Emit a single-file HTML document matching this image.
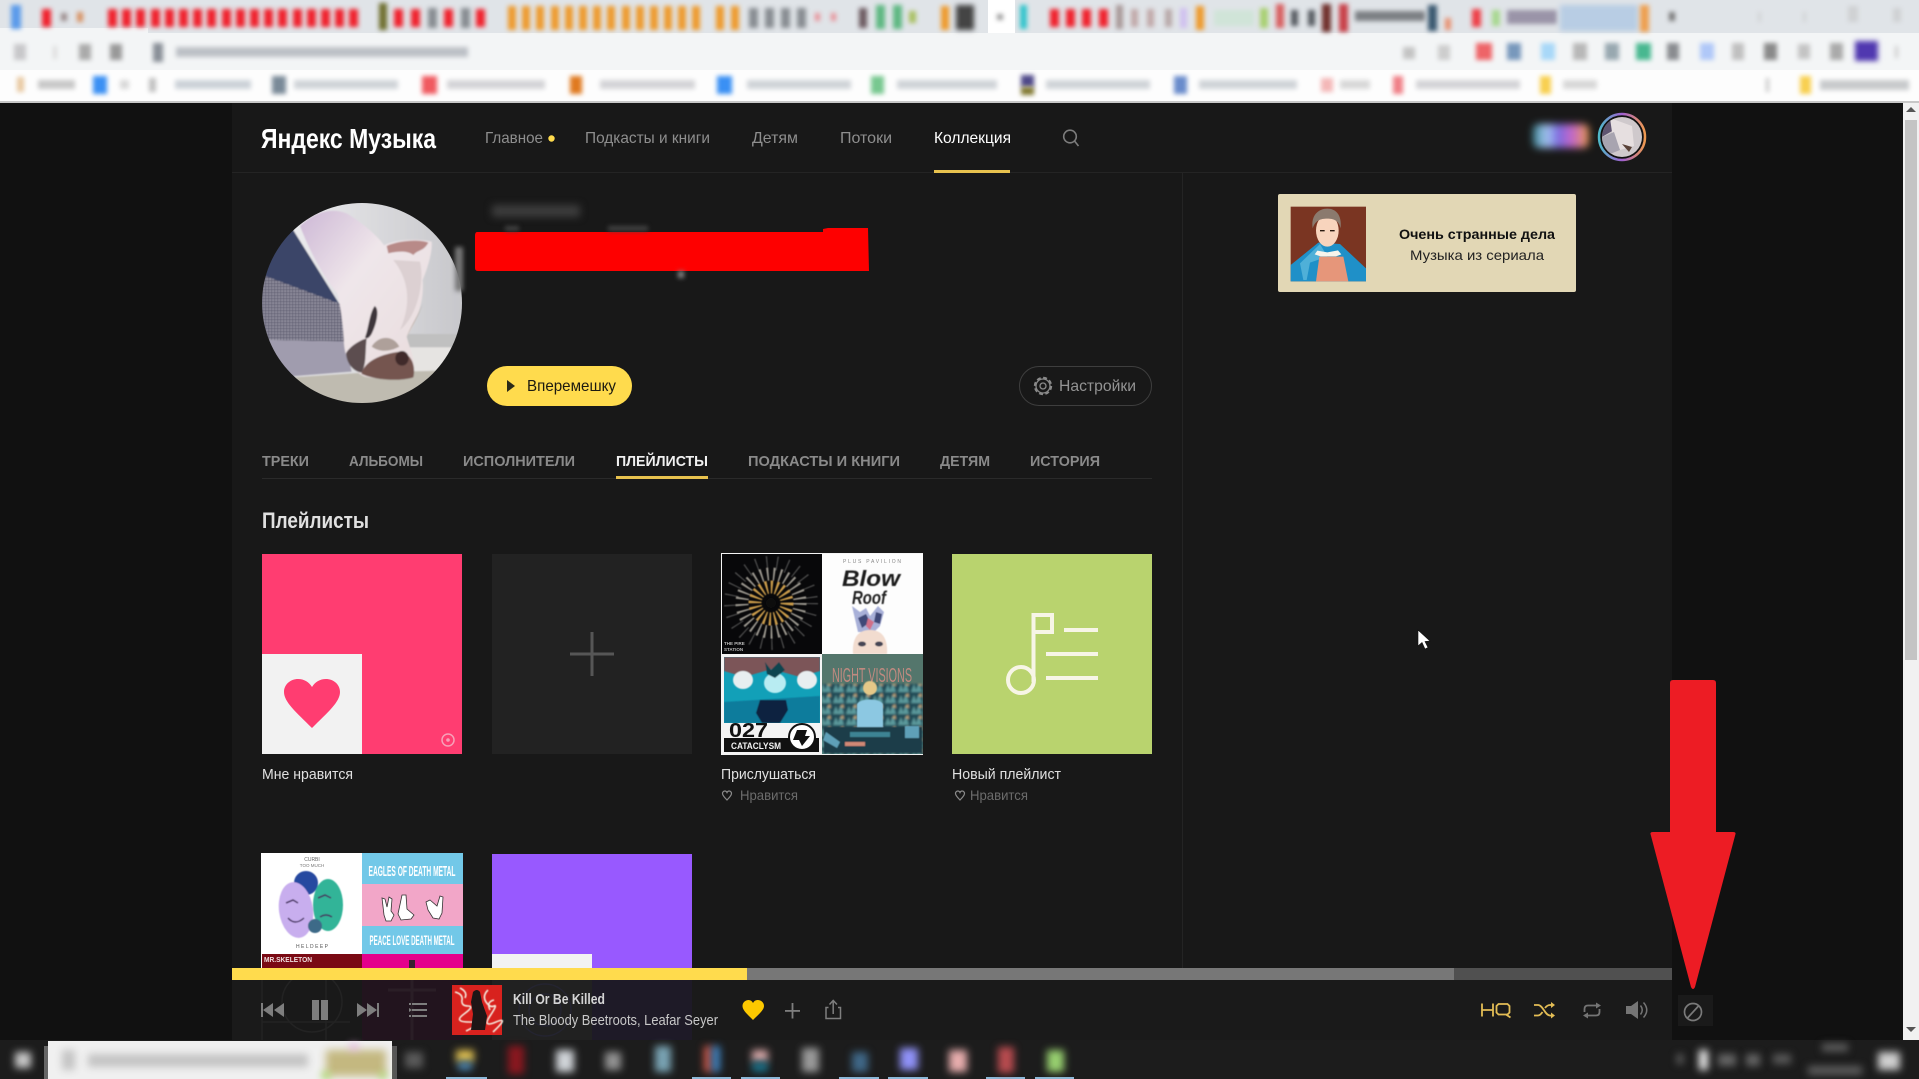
<!DOCTYPE html>
<html lang="ru"><head><meta charset="utf-8"><title>Яндекс Музыка</title>
<style>
html,body{margin:0;padding:0;background:#111;overflow:hidden;width:1919px;height:1079px}
body{position:relative}
svg{display:block;position:absolute;left:0;top:0}
i{position:absolute;display:block;margin-left:-3000px;box-shadow:3000px 0 5px}
i.t{box-shadow:3000px 0 8px}
i.r{top:9px;width:9px;height:18px;color:#f0202c}
i.o{top:6px;width:8px;height:24px;color:#ee9a2c}
i.g{top:8px;width:9px;height:20px;color:#888d92}
text{font-family:"Liberation Sans","Noto Sans CJK SC",sans-serif}
</style></head><body>
<svg xmlns="http://www.w3.org/2000/svg" width="1919" height="1079" viewBox="0 0 1919 1079">
<defs>
<filter id="b3" x="-20%" y="-50%" width="140%" height="200%"><feGaussianBlur stdDeviation="4"/></filter>
<filter id="b2" x="-20%" y="-50%" width="140%" height="200%"><feGaussianBlur stdDeviation="2"/></filter>
<filter id="b1" x="-10%" y="-10%" width="120%" height="120%"><feGaussianBlur stdDeviation="1"/></filter>
<filter id="b05" x="-10%" y="-10%" width="120%" height="120%"><feGaussianBlur stdDeviation="0.6"/></filter>
<filter id="bd" x="-10%" y="-10%" width="120%" height="120%"><feGaussianBlur stdDeviation="2.500"/></filter>
<pattern id="chk" width="9" height="9" patternUnits="userSpaceOnUse"><rect width="9" height="9" fill="#a8a6b4"/><rect width="3.500" height="9" fill="#56556a"/><rect width="9" height="3.500" fill="#56556a"/></pattern>
<pattern id="crowd" width="13" height="11" patternUnits="userSpaceOnUse"><rect width="13" height="11" fill="#234b56"/><path d="M1 10l3-8 2 6 3-7 3 9z" fill="#5c9a9c"/><path d="M8 3l3-3 1 4z" fill="#c8a878"/></pattern>
<clipPath id="av"><circle cx="362" cy="303" r="100"/></clipPath>
<clipPath id="av2"><circle cx="1622" cy="137" r="20"/></clipPath>
<clipPath id="c1"><rect x="724" y="657" width="96" height="66"/></clipPath>
<clipPath id="c2"><rect x="822" y="654" width="101" height="100"/></clipPath>
<clipPath id="c3"><rect x="822" y="554" width="101" height="100"/></clipPath>
<clipPath id="c0"><rect x="722" y="554" width="100" height="100"/></clipPath>
<clipPath id="pl"><rect x="232" y="980" width="1440" height="60"/></clipPath>
<linearGradient id="ring" x1="0" y1="0" x2="1" y2="0"><stop offset="0" stop-color="#4fb8c8"/><stop offset=".5" stop-color="#a05fd0"/><stop offset="1" stop-color="#f09a50"/></linearGradient>
<linearGradient id="userb" x1="0" y1="0" x2="1" y2="0"><stop offset="0" stop-color="#3b8a98"/><stop offset=".25" stop-color="#a4c4f0"/><stop offset=".45" stop-color="#7a6ae0"/><stop offset=".7" stop-color="#c467c8"/><stop offset="1" stop-color="#e89a4a"/></linearGradient>
<linearGradient id="wall" x1="0" y1="0" x2="1" y2="0"><stop offset="0" stop-color="#f2f2f4"/><stop offset="1" stop-color="#c6c6ca"/></linearGradient>
<linearGradient id="dogb" x1="0" y1="0" x2="1" y2="1"><stop offset="0" stop-color="#cdb8d6"/><stop offset=".4" stop-color="#efe6ea"/><stop offset="1" stop-color="#e8dcdc"/></linearGradient>
</defs>

<!-- browser chrome -->
<rect width="1919" height="33" fill="#e0e4e8"/>
<rect y="33" width="1919" height="37" fill="#f3f5f6"/>
<rect y="70" width="1919" height="32" fill="#fdfdfd"/>
<rect y="101" width="1919" height="2" fill="#c8c8c8"/>
<rect x="0" y="28" width="148" height="8" fill="#f3f5f6"/>
<rect x="988" y="0" width="27" height="33" fill="#ffffff"/>

<!-- page -->
<rect y="103" width="1919" height="937" fill="#111"/>
<rect x="232" y="103" width="1440" height="937" fill="#181818"/>
<rect x="232" y="172" width="1440" height="1" fill="#242424"/>
<rect x="1182" y="173" width="1" height="795" fill="#242424"/>
<rect x="1903" y="103" width="16" height="937" fill="#f1f1f1"/>
<rect x="1905" y="120" width="12" height="540" fill="#c4c4c4"/>
<path d="M1906 1027h10l-5 5z" fill="#555"/><path d="M1906 112h10l-5-5z" fill="#555"/>

<!-- header -->
<text x="261" y="148" font-size="28" font-weight="bold" fill="#fff" textLength="175" lengthAdjust="spacingAndGlyphs">Яндекс Музыка</text>
<text x="485" y="143" font-size="16" fill="#8e8e8e" textLength="58" lengthAdjust="spacingAndGlyphs">Главное</text>
<circle cx="551.500" cy="138.500" r="3.200" fill="#ffdb4d"/>
<text x="585" y="143" font-size="16" fill="#8e8e8e" textLength="125" lengthAdjust="spacingAndGlyphs">Подкасты и книги</text>
<text x="752" y="143" font-size="16" fill="#8e8e8e" textLength="46" lengthAdjust="spacingAndGlyphs">Детям</text>
<text x="840" y="143" font-size="16" fill="#8e8e8e" textLength="52" lengthAdjust="spacingAndGlyphs">Потоки</text>
<text x="934" y="143" font-size="16" fill="#fff" textLength="77" lengthAdjust="spacingAndGlyphs">Коллекция</text>
<rect x="934" y="170" width="76" height="3" fill="#e8c24e"/>
<circle cx="1070" cy="136.500" r="6.300" fill="none" stroke="#7c7c7c" stroke-width="1.600"/><path d="M1074.500 141l4 5" stroke="#7c7c7c" stroke-width="1.600" fill="none"/>
<rect x="1533" y="124" width="56" height="24" rx="6" fill="url(#userb)" filter="url(#b3)"/>
<circle cx="1622" cy="137" r="23" fill="#111" stroke="url(#ring)" stroke-width="2.500"/>
<g clip-path="url(#av2)"><rect x="1600" y="115" width="44" height="44" fill="#cfc9cc"/><path d="M1600 118h12l2 12-14 8z" fill="#5e5470"/><path d="M1610 118l22 8 2 20-14 4-8-18z" fill="#e6dfe0"/><path d="M1622 144l10 3-3 5z" fill="#5a4238"/><path d="M1600 138l14-6 6 18-20 8z" fill="#a8a4b0"/></g>

<!-- banner -->
<rect x="1278" y="194" width="298" height="98" rx="2" fill="#e2d7b5"/>
<g transform="translate(1240 100) scale(.33333)">
<rect x="152" y="320" width="226" height="224" fill="#7a3522"/>
<path d="M152 544V495L235 428 300 432 378 505V544Z" fill="#1f90c8"/>
<path d="M180 490L240 432 262 470 210 488 200 540H190Z" fill="#4fb0d8"/>
<path d="M238 470H310L325 544H228Z" fill="#e6967a"/>
<ellipse cx="262" cy="392" rx="34" ry="48" fill="#f8d4bd"/>
<path d="M218 385C212 345 236 326 262 326 288 326 306 345 302 385 296 362 282 356 262 356 240 356 226 362 218 385Z" fill="#8b7a6e"/>
<path d="M232 452l30 5 32-6 10 12-16 6h-46l-18-6z" fill="#f8f4ec"/>
<path d="M240 392h14M270 392h14" stroke="#2a1a10" stroke-width="4"/>
</g>
<text x="1477" y="239" text-anchor="middle" font-size="14" font-weight="bold" fill="#111" textLength="156" lengthAdjust="spacingAndGlyphs">Очень странные дела</text>
<text x="1477" y="260" text-anchor="middle" font-size="14" fill="#222" textLength="134" lengthAdjust="spacingAndGlyphs">Музыка из сериала</text>

<!-- avatar -->
<g clip-path="url(#av)"><g transform="translate(250 190) scale(.33333)" filter="url(#bd)">
<rect x="30" y="30" width="620" height="620" fill="url(#wall)"/>
<rect x="460" y="432" width="170" height="40" fill="#c0c0c0"/>
<rect x="470" y="472" width="170" height="75" fill="#e6e4e2"/>
<path d="M30 258L120 105 270 345 280 350Z" fill="#3a4468"/>
<path d="M30 252L280 345 285 455 30 450Z" fill="url(#chk)"/>
<path d="M30 450L285 455 305 545 120 560 30 500Z" fill="#a09cae"/>
<path d="M120 562L340 548 640 540V650H120Z" fill="#bfbbb0"/>
<path d="M150 108C190 70 240 50 290 70 340 100 385 140 402 166 440 148 500 145 545 155 548 190 530 240 518 270 522 320 510 380 470 440 480 480 498 510 490 545 480 565 400 572 345 560 310 545 285 510 282 460 280 400 270 340 262 310 230 270 190 210 150 108Z" fill="url(#dogb)"/>
<path d="M410 168C450 150 510 148 535 158 520 185 505 178 490 195 470 180 440 185 415 190Z" fill="#b88a88"/>
<path d="M430 210C470 260 490 330 450 420 500 380 525 280 510 215Z" fill="#dcd0d2"/>
<path d="M374 348C388 355 382 395 368 425 360 445 350 448 345 442 355 420 358 370 374 348Z" fill="#3e343a"/>
<path d="M288 490C298 470 330 450 350 445 345 490 350 520 335 548 310 545 290 520 288 490Z" fill="#5c4e50"/>
<path d="M335 548C350 505 410 490 450 485 485 490 498 530 490 562 450 574 380 572 335 552Z" fill="#74544f"/>
<ellipse cx="456" cy="505" rx="20" ry="22" fill="#402c2a"/>
<path d="M365 470C385 435 430 435 448 470 420 485 390 488 365 470Z" fill="#aea09a"/>
<path d="M470 440C490 400 510 370 517 340 508 372 490 395 470 440Z" fill="#8a7a60"/>
</g></g>

<!-- redaction -->
<path d="M477 232H823V229L828 228H868L869 271H478Q475 271 475 268V236Q475 232 477 232Z" fill="#fe0000"/>

<!-- buttons -->
<rect x="487" y="366" width="145" height="40" rx="20" fill="#ffdb4d"/>
<path d="M507 380l8 6-8 6z" fill="#2a2a18"/>
<text x="527" y="391" font-size="16" fill="#1c1a10" textLength="89" lengthAdjust="spacingAndGlyphs">Вперемешку</text>
<rect x="1019.500" y="366.500" width="132" height="39" rx="19.500" fill="none" stroke="#3e3e3e"/>
<circle cx="1043" cy="386" r="7" fill="none" stroke="#8a8a8a" stroke-width="1.300"/><circle cx="1043" cy="386" r="8.300" fill="none" stroke="#8a8a8a" stroke-width="1.800" stroke-dasharray="4 2.500"/><circle cx="1043" cy="386" r="3" fill="none" stroke="#8a8a8a" stroke-width="1.300"/>
<text x="1059" y="391" font-size="16" fill="#939393" textLength="77" lengthAdjust="spacingAndGlyphs">Настройки</text>

<!-- tabs -->
<rect x="262" y="478" width="890" height="1" fill="#2a2a2a"/>
<g font-size="15" font-weight="bold" fill="#8a8a8a">
<text x="262" y="466" textLength="47" lengthAdjust="spacingAndGlyphs">ТРЕКИ</text>
<text x="349" y="466" textLength="74" lengthAdjust="spacingAndGlyphs">АЛЬБОМЫ</text>
<text x="463" y="466" textLength="112" lengthAdjust="spacingAndGlyphs">ИСПОЛНИТЕЛИ</text>
<text x="616" y="466" fill="#f0f0f0" textLength="92" lengthAdjust="spacingAndGlyphs">ПЛЕЙЛИСТЫ</text>
<text x="748" y="466" textLength="152" lengthAdjust="spacingAndGlyphs">ПОДКАСТЫ И КНИГИ</text>
<text x="940" y="466" textLength="50" lengthAdjust="spacingAndGlyphs">ДЕТЯМ</text>
<text x="1030" y="466" textLength="70" lengthAdjust="spacingAndGlyphs">ИСТОРИЯ</text>
</g>
<rect x="616" y="476" width="92" height="3" fill="#e8c24e"/>
<text x="262" y="528" font-size="22" font-weight="bold" fill="#e0e0e0" textLength="107" lengthAdjust="spacingAndGlyphs">Плейлисты</text>

<!-- tile 1 -->
<rect x="262" y="554" width="200" height="200" fill="#ff3d71"/>
<rect x="262" y="654" width="100" height="100" fill="#f2f2f2"/>
<path d="M312 728C296 712 284 702 284 692 284 684 291 679 298 679 304 679 309 682 312 687 315 682 320 679 326 679 333 679 340 684 340 692 340 702 328 712 312 728Z" fill="#ff3d71"/>
<circle cx="448" cy="740" r="6" fill="none" stroke="#f7a0b8" stroke-width="1.500"/><circle cx="448" cy="740" r="1.800" fill="#f7a0b8"/>
<text x="262" y="779" font-size="15" fill="#e0e0e0" textLength="91" lengthAdjust="spacingAndGlyphs">Мне нравится</text>

<!-- tile 2 -->
<rect x="492" y="554" width="200" height="200" fill="#222"/>
<rect x="570" y="652.500" width="44" height="3" fill="#565656"/><rect x="590.500" y="632" width="3" height="44" fill="#565656"/>

<!-- tile 3 -->
<rect x="721" y="553" width="202" height="202" fill="#f4f4f4"/>
<rect x="722" y="554" width="100" height="100" fill="#08080a"/>
<g clip-path="url(#c0)" fill="none" filter="url(#b05)">
<circle cx="771" cy="603" r="40" stroke="#4c4c4c" stroke-width="14" stroke-dasharray="1.200 9"/>
<circle cx="771" cy="603" r="29" stroke="#98948c" stroke-width="13" stroke-dasharray="1.800 4.500"/>
<circle cx="771" cy="603" r="16" stroke="#c89a48" stroke-width="13" stroke-dasharray="2 3"/>
<circle cx="771" cy="603" r="5" fill="#111"/>
</g>
<text x="724" y="645" font-size="4.500" font-weight="bold" fill="#bbb">THE PIRE</text><text x="724" y="651" font-size="4.500" font-weight="bold" fill="#bbb">STATION</text>
<rect x="822" y="554" width="101" height="100" fill="#fdfdfd"/>
<g clip-path="url(#c3)">
<text x="872" y="563" text-anchor="middle" font-size="5" fill="#888" textLength="58">PLUS PAVILION</text>
<g filter="url(#b05)">
<text x="842" y="586" font-size="22" font-weight="bold" font-style="italic" fill="#1a1a1a" textLength="58" lengthAdjust="spacingAndGlyphs">Blow</text>
<text x="852" y="604" font-size="18" font-weight="bold" font-style="italic" fill="#222" textLength="34" lengthAdjust="spacingAndGlyphs">Roof</text>
<path d="M852 606l8 6 6-4 4 8 8-10 6 6-4 14-6 6h-16z" fill="#a8b0d8"/><path d="M858 618l8-4 4 8-8 6zM876 612l6 2-2 10-6-2z" fill="#404878"/><path d="M868 618l6 4-4 8-4-4z" fill="#d07088"/>
<path d="M853 654C852 638 858 630 870 630 882 630 888 638 887 654Z" fill="#f2dccf"/><ellipse cx="862" cy="644" rx="4" ry="2.500" fill="#445"/><ellipse cx="879" cy="644" rx="4" ry="2.500" fill="#445"/>
</g></g>
<rect x="722" y="654" width="100" height="100" fill="#f4f4f4"/>
<rect x="724" y="657" width="96" height="66" fill="#12a0b8"/>
<g clip-path="url(#c1)" filter="url(#b05)">
<path d="M724 657h96v14l-20 6-28-8-28 8-20-6z" fill="#7c5558"/>
<ellipse cx="743" cy="680" rx="10" ry="9" fill="#e8eef0"/><ellipse cx="807" cy="680" rx="10" ry="9" fill="#e8eef0"/>
<path d="M724 702l96-6v27h-96z" fill="#0c7c9c"/>
<ellipse cx="775" cy="683" rx="11" ry="10" fill="#b8ecf2"/>
<path d="M760 700h26l2 10-8 13h-18l-6-10z" fill="#0e2440"/>
<path d="M765 662l6 8 8-8 6 8-10 8-8-4z" fill="#0e4450"/>
</g>
<text x="729" y="737" font-size="20" font-weight="bold" fill="#111" textLength="39" lengthAdjust="spacingAndGlyphs">027</text>
<rect x="724" y="738" width="95" height="14" fill="#111"/>
<text x="731" y="749" font-size="9" font-weight="bold" fill="#f4f4f4" textLength="50" lengthAdjust="spacingAndGlyphs">CATACLYSM</text>
<circle cx="802" cy="737" r="13" fill="#fff" stroke="#111" stroke-width="2"/><path d="M797 730h10l-2 6h5l-8 10-3-6h-6z" fill="#111"/>
<rect x="822" y="654" width="101" height="100" fill="#54766c"/>
<g clip-path="url(#c2)">
<rect x="822" y="684" width="101" height="70" fill="url(#crowd)" filter="url(#b1)"/>
<text x="832" y="682" font-size="20" fill="#c08a80" textLength="80" lengthAdjust="spacingAndGlyphs">NIGHT VISIONS</text>
<g filter="url(#b05)">
<path d="M857 727V704C860 698 880 698 883 704V727Z" fill="#8cc8e2"/>
<circle cx="870" cy="688" r="7" fill="#e4c888"/>
<rect x="824" y="727" width="98" height="26" fill="#1d3c48"/>
<path d="M826 732l14 10-3 6-14-8zM905 726h14v12h-14z" fill="#5ea0b8"/><rect x="850" y="732" width="40" height="5" fill="#3c8494"/><rect x="845" y="742" width="20" height="4" fill="#d08874"/>
</g></g>
<text x="721" y="779" font-size="15" fill="#e0e0e0" textLength="95" lengthAdjust="spacingAndGlyphs">Прислушаться</text>
<path d="M727 800c-3-3-4.500-4.800-4.500-6.500 0-1.500 1.200-2.500 2.300-2.500 1 0 1.800.6 2.200 1.500.4-.9 1.200-1.500 2.200-1.500 1.100 0 2.300 1 2.300 2.500 0 1.700-1.500 3.500-4.500 6.500z" fill="none" stroke="#8a8a8a" stroke-width="1.200"/>
<text x="740" y="800" font-size="14" fill="#6c6c6c" textLength="58" lengthAdjust="spacingAndGlyphs">Нравится</text>

<!-- tile 4 -->
<rect x="952" y="554" width="200" height="200" fill="#b9d36e"/>
<g fill="none" stroke="#f7f5e6" stroke-width="4">
<circle cx="1021" cy="680" r="13"/><path d="M1033.500 682V615H1052V632H1035"/>
<path d="M1064 630H1098M1046 654H1098M1046 678H1098"/>
</g>
<text x="952" y="779" font-size="15" fill="#e0e0e0" textLength="109" lengthAdjust="spacingAndGlyphs">Новый плейлист</text>
<path d="M960 800c-3-3-4.500-4.800-4.500-6.500 0-1.500 1.200-2.500 2.300-2.500 1 0 1.800.6 2.200 1.500.4-.9 1.200-1.500 2.200-1.500 1.100 0 2.300 1 2.300 2.500 0 1.700-1.500 3.500-4.500 6.500z" fill="none" stroke="#8a8a8a" stroke-width="1.200"/>
<text x="970" y="800" font-size="14" fill="#6c6c6c" textLength="58" lengthAdjust="spacingAndGlyphs">Нравится</text>

<!-- row 2 -->
<rect x="261" y="853" width="202" height="115" fill="#fff"/>
<g filter="url(#b05)">
<circle cx="306" cy="883" r="12" fill="#2848a0"/>
<ellipse cx="296" cy="910" rx="17" ry="28" fill="#c8aeee" transform="rotate(-8 296 910)"/>
<ellipse cx="328" cy="905" rx="15" ry="26" fill="#30b498"/>
<circle cx="315" cy="926" r="7" fill="#3c6a88"/>
<path d="M286 903l7-3 5 3M318 898l7-3 6 3M288 918q7 8 16 0M320 917q6-4 12 0" stroke="#443060" stroke-width="1.500" fill="none"/>
</g>
<text x="312" y="861" text-anchor="middle" font-size="5" fill="#666">CURBI</text><text x="312" y="867" text-anchor="middle" font-size="4.500" fill="#777">TOO MUCH</text>
<text x="312" y="948" text-anchor="middle" font-size="5" fill="#555" textLength="32">HELDEEP</text>
<rect x="262" y="954" width="100" height="14" fill="#7a0a14"/>
<text x="264" y="962" font-size="7.500" font-weight="bold" fill="#f0e0e0" textLength="48" lengthAdjust="spacingAndGlyphs">MR.SKELETON</text>
<rect x="362" y="853" width="101" height="31" fill="#72c8e8"/>
<rect x="362" y="884" width="101" height="42" fill="#f2a6c8"/>
<rect x="362" y="926" width="101" height="28" fill="#72c8e8"/>
<rect x="362" y="954" width="101" height="14" fill="#e4008c"/>
<rect x="409" y="960" width="6" height="8" fill="#3a2030"/>
<text x="412" y="876" text-anchor="middle" font-size="15" font-weight="bold" fill="#fff" textLength="87" lengthAdjust="spacingAndGlyphs">EAGLES OF DEATH METAL</text>
<text x="412" y="945" text-anchor="middle" font-size="14" font-weight="bold" fill="#fff" textLength="85" lengthAdjust="spacingAndGlyphs">PEACE LOVE DEATH METAL</text>
<g fill="#fff" stroke="#333" stroke-width=".8"><path d="M384 915l-2-17 3 1 2 8 2-10 3 2-1 12 3 4-3 6h-5z"/><path d="M402 895h4l1 14 7 6-3 4-10 1-3-6z"/><path d="M430 900l7 6 3-10 3 1-1 16-3 6-6-1-5-8-2-8z"/></g>
<rect x="492" y="854" width="200" height="114" fill="#9859ff"/>
<rect x="492" y="954" width="100" height="14" fill="#f2f2f2"/>

<!-- progress -->
<rect x="232" y="968" width="1440" height="12" fill="#505050"/>
<rect x="232" y="968" width="1222" height="12" fill="#777"/>
<rect x="232" y="968" width="515" height="12" fill="#ffdb4d"/>

<!-- player backdrop -->
<rect x="232" y="980" width="1440" height="60" fill="#1a1a1a"/>
<rect x="262" y="980" width="100" height="60" fill="#191919"/>
<rect x="362" y="980" width="100" height="60" fill="#22141e"/>
<rect x="492" y="980" width="100" height="60" fill="#212121"/>
<rect x="592" y="980" width="100" height="60" fill="#1e1a27"/>
<g clip-path="url(#pl)">
<g fill="none" stroke="#232323" stroke-width="1.500"><circle cx="312" cy="1002" r="30"/><path d="M262 1022H350M326 980V1040M262 980V1040"/></g>
<path d="M388 990H436M412 980V1040" stroke="#2a1e26" stroke-width="3" fill="none"/>
<g fill="none" stroke="#242430" stroke-width="1.500"><circle cx="545" cy="1010" r="26"/><circle cx="545" cy="1010" r="16"/></g>
</g>

<!-- controls -->
<g fill="#7e7e7e">
<rect x="261" y="1003" width="2" height="14"/><path d="M273 1003V1017L263 1010ZM284 1003V1017L274 1010Z"/>
<rect x="312" y="1000" width="7" height="20"/><rect x="321" y="1000" width="7" height="20"/>
<rect x="377" y="1003" width="2" height="14"/><path d="M357 1003V1017L367 1010ZM367 1003V1017L377 1010Z"/>
<rect x="412" y="1003" width="15" height="2"/><rect x="412" y="1009" width="15" height="2"/><rect x="412" y="1015" width="15" height="2"/>
<rect x="409" y="1003" width="2" height="2"/><path d="M409 1008l3 2-3 2z"/><rect x="409" y="1015" width="2" height="2"/>
</g>
<rect x="452" y="985" width="50" height="50" fill="#d8221e"/>
<g filter="url(#b05)" fill="none" stroke="#f4e8dc" stroke-width="1.600">
<path d="M455 992q8 2 7 8t6 6-4 8 5 8-3 9M460 988q8 4 5 10M488 990q-6 6-2 12t8 4-4 10 6 6-3 10M494 1000q-8 2-4 10"/></g>
<path d="M473 992q4-4 7 0l2 10 5 14-2 14h-14l2-16-2-12z" fill="#1e1616"/>
<text x="513" y="1004" font-size="15" font-weight="bold" fill="#d4d4d4" textLength="92" lengthAdjust="spacingAndGlyphs">Kill Or Be Killed</text>
<text x="513" y="1025" font-size="15" fill="#c8c8c8" textLength="205" lengthAdjust="spacingAndGlyphs">The Bloody Beetroots, Leafar Seyer</text>
<path d="M753 1020C747 1014 742.500 1010 742.500 1006 742.500 1002 746 1000 748.500 1000 750.500 1000 752 1001 753 1003 754 1001 755.500 1000 757.500 1000 760.500 1000 764 1002 764 1006 764 1010 759 1014 753 1020Z" fill="#fcc800"/>
<rect x="785" y="1010" width="15" height="1.800" fill="#7e7e7e"/><rect x="791.600" y="1003" width="1.800" height="15.500" fill="#7e7e7e"/>
<g fill="none" stroke="#7e7e7e" stroke-width="1.500"><path d="M828.500 1007.500H826V1018.500H840.500V1007.500H838"/><path d="M833.200 1014V1001M829.500 1004.500L833.200 1000.500 837 1004.500"/></g>

<!-- right controls -->
<g fill="none" stroke="#e3bd55" stroke-width="1.800">
<path d="M1482 1003.500V1016.500M1482 1010H1493M1493 1003.500V1016.500"/>
<path d="M1498.500 1004H1507.500L1509.500 1006V1012.500L1507.500 1014.500H1498.500L1496.500 1012.500V1006ZM1506 1014.500L1510.500 1017.500"/>
<path d="M1534 1005H1538C1543 1005 1545 1015.500 1550 1015.500H1552M1534 1015.500H1538C1540 1015.500 1541.500 1013.500 1542.500 1012M1545 1008C1546.500 1006 1548 1005 1550 1005H1552"/>
</g>
<path d="M1551 1002l4 3-4 3zM1551 1012.500l4 3-4 3z" fill="#e3bd55"/>
<g fill="none" stroke="#757575" stroke-width="1.800">
<path d="M1584.500 1012V1009Q1584.500 1005.500 1588 1005.500H1598M1599.500 1009V1012Q1599.500 1015.500 1596 1015.500H1586"/></g>
<path d="M1596 1002.500l5 3-5 3zM1588 1012.500l-5 3 5 3z" fill="#757575"/>
<path d="M1626 1006H1631L1638 1001V1019L1631 1014H1626Z" fill="#757575"/>
<g fill="none" stroke="#757575" stroke-width="1.500"><path d="M1640.500 1005.500Q1644 1010 1640.500 1014.500"/><path d="M1643.500 1002.500Q1650 1010 1643.500 1017.500"/></g>
<rect x="1678" y="995" width="35" height="31" fill="#1a1a1a"/>
<circle cx="1693" cy="1012" r="8.500" fill="none" stroke="#7a7a7a" stroke-width="1.700"/><path d="M1687.500 1018L1698.500 1006" stroke="#7a7a7a" stroke-width="1.700"/>

<!-- red arrow -->
<path d="M1670 683Q1670 680 1673 680H1713Q1716 680 1716 683V832H1733Q1736 832 1735.500 834L1695 987Q1693 991 1691 987L1650.500 834Q1650 832 1653 832H1670Z" fill="#ed1c24"/>

<!-- cursor -->
<path d="M1418 630V646L1422 642.500 1425 649 1428 647.500 1425 641.500 1430 641Z" fill="#fff" stroke="#111" stroke-width=".6"/>

<!-- taskbar base -->
<rect y="1040" width="1919" height="39" fill="#1c1c1c"/>
<rect x="44" y="1046" width="4" height="33" fill="#666"/><rect x="392" y="1046" width="5" height="33" fill="#555"/>
<rect x="48" y="1041" width="344" height="38" fill="#f0f0f0"/>
<g fill="#8cb8d8">
<rect x="446" y="1077" width="41" height="2"/><rect x="692" y="1077" width="39" height="2"/><rect x="741" y="1077" width="39" height="2"/><rect x="839" y="1077" width="40" height="2"/><rect x="888" y="1077" width="40" height="2"/><rect x="986" y="1077" width="39" height="2"/><rect x="1035" y="1077" width="39" height="2"/>
</g>
</svg>

<!-- blurred tab strip -->
<i style="left:11px;top:5px;width:10px;height:24px;color:#5b9bea"></i>
<i class="r" style="left:42px"></i><i style="left:61px;top:13px;width:6px;height:8px;color:#9a8a8a"></i><i style="left:77px;top:12px;width:6px;height:10px;color:#d89060"></i>
<i class="r" style="left:108px"></i><i class="r" style="left:122px"></i><i class="r" style="left:136px"></i><i class="r" style="left:151px"></i><i class="r" style="left:165px"></i><i class="r" style="left:179px"></i><i class="r" style="left:193px"></i><i class="r" style="left:207px"></i><i class="r" style="left:222px"></i><i class="r" style="left:236px"></i><i class="r" style="left:250px"></i><i class="r" style="left:264px"></i><i class="r" style="left:278px"></i><i class="r" style="left:293px"></i><i class="r" style="left:307px"></i><i class="r" style="left:321px"></i><i class="r" style="left:335px"></i><i class="r" style="left:349px"></i>
<i style="left:379px;top:3px;width:8px;height:27px;color:#6e6e2e"></i>
<i class="r" style="left:394px"></i><i class="r" style="left:411px"></i><i class="g" style="left:428px"></i><i class="r" style="left:444px"></i><i class="g" style="left:461px"></i><i class="r" style="left:476px"></i>
<i class="o" style="left:508px"></i><i class="o" style="left:522px"></i><i class="o" style="left:536px"></i><i class="o" style="left:551px"></i><i class="o" style="left:565px"></i><i class="o" style="left:579px"></i><i class="o" style="left:593px"></i><i class="o" style="left:607px"></i><i class="o" style="left:622px"></i><i class="o" style="left:636px"></i><i class="o" style="left:650px"></i><i class="o" style="left:664px"></i><i class="o" style="left:678px"></i><i class="o" style="left:692px"></i>
<i class="o" style="left:716px"></i><i class="o" style="left:731px"></i>
<i class="g" style="left:749px"></i><i class="g" style="left:765px"></i><i class="g" style="left:781px"></i><i class="g" style="left:797px"></i>
<i style="left:815px;top:13px;width:5px;height:8px;color:#e89098"></i><i style="left:831px;top:13px;width:5px;height:8px;color:#e89098"></i>
<i style="left:859px;top:8px;width:8px;height:20px;color:#6c5a60"></i>
<i style="left:876px;top:5px;width:9px;height:24px;color:#5eb882"></i><i style="left:893px;top:5px;width:9px;height:24px;color:#5eb882"></i><i style="left:909px;top:11px;width:7px;height:12px;color:#a8c060"></i>
<i class="o" style="left:941px"></i><i style="left:956px;top:5px;width:18px;height:25px;color:#444"></i>
<i style="left:997px;top:14px;width:6px;height:6px;color:#999"></i>
<i style="left:1020px;top:5px;width:7px;height:24px;color:#30c4cc"></i>
<i class="r" style="left:1050px"></i><i class="r" style="left:1066px"></i><i class="r" style="left:1082px"></i><i class="r" style="left:1099px"></i>
<i style="left:1116px;top:5px;width:7px;height:24px;color:#a89898"></i><i style="left:1131px;top:9px;width:7px;height:18px;color:#c0a8a8"></i><i style="left:1147px;top:9px;width:7px;height:18px;color:#c0a8a8"></i><i style="left:1165px;top:9px;width:7px;height:18px;color:#b8a8a8"></i>
<i style="left:1180px;top:8px;width:7px;height:20px;color:#d0c0f0"></i><i class="o" style="left:1196px"></i>
<i style="left:1214px;top:10px;width:40px;height:16px;color:#d0e4d8"></i><i style="left:1260px;top:8px;width:8px;height:20px;color:#a8d070"></i>
<i style="left:1276px;top:4px;width:8px;height:24px;color:#d86060"></i><i style="left:1291px;top:10px;width:7px;height:16px;color:#555a60"></i><i style="left:1308px;top:10px;width:7px;height:16px;color:#555a60"></i>
<i style="left:1322px;top:4px;width:9px;height:28px;color:#70302c"></i><i style="left:1339px;top:4px;width:9px;height:28px;color:#c84048"></i>
<i style="left:1355px;top:11px;width:70px;height:10px;color:#7c7f84"></i><i style="left:1428px;top:5px;width:9px;height:26px;color:#3a5870"></i>
<i style="left:1445px;top:18px;width:6px;height:12px;color:#e89070"></i>
<i style="left:1472px;top:9px;width:9px;height:18px;color:#ee4048"></i><i style="left:1492px;top:10px;width:8px;height:16px;color:#a8d890"></i>
<i style="left:1507px;top:10px;width:50px;height:14px;color:#9a94a8"></i>
<i style="left:1560px;top:5px;width:78px;height:26px;color:#b8cde4"></i><i style="left:1640px;top:5px;width:9px;height:27px;color:#eea050"></i>
<i style="left:1669px;top:12px;width:6px;height:9px;color:#777"></i>
<i style="left:1758px;top:12px;width:3px;height:10px;color:#d0d2d4"></i><i style="left:1803px;top:12px;width:3px;height:10px;color:#d0d2d4"></i><i style="left:1848px;top:6px;width:10px;height:16px;color:#cfd1d3"></i><i style="left:1893px;top:8px;width:8px;height:14px;color:#cfd1d3"></i>

<!-- blurred toolbar -->
<i style="left:14px;top:44px;width:12px;height:16px;color:#c8c8ca"></i><i style="left:53px;top:46px;width:4px;height:13px;color:#ddd"></i><i style="left:79px;top:44px;width:12px;height:16px;color:#aaa"></i><i style="left:110px;top:44px;width:12px;height:16px;color:#999"></i><i style="left:153px;top:43px;width:10px;height:19px;color:#8a9098"></i>
<i style="left:176px;top:47px;width:292px;height:10px;color:#bcc0c6"></i>
<i style="left:1403px;top:47px;width:12px;height:12px;color:#c4c4c4"></i><i style="left:1438px;top:45px;width:12px;height:15px;color:#cdcdcd"></i><i style="left:1476px;top:43px;width:16px;height:17px;color:#ee6468"></i><i style="left:1507px;top:43px;width:14px;height:17px;color:#7898bc"></i><i style="left:1541px;top:43px;width:14px;height:17px;color:#a8d8f8"></i><i style="left:1573px;top:43px;width:14px;height:17px;color:#b8b8b8"></i><i style="left:1605px;top:43px;width:14px;height:17px;color:#98a8b0"></i><i style="left:1636px;top:43px;width:15px;height:17px;color:#48b890"></i><i style="left:1667px;top:43px;width:12px;height:17px;color:#8a8c90"></i><i style="left:1700px;top:43px;width:14px;height:17px;color:#b0c8f8"></i><i style="left:1732px;top:43px;width:12px;height:17px;color:#c0c0c0"></i><i style="left:1764px;top:43px;width:13px;height:17px;color:#8a8a8a"></i><i style="left:1798px;top:44px;width:12px;height:15px;color:#c4c4c4"></i><i style="left:1830px;top:43px;width:13px;height:17px;color:#aaa"></i>
<i style="left:1855px;top:41px;width:23px;height:20px;color:#5038b0"></i><i style="left:1895px;top:46px;width:3px;height:12px;color:#ccc"></i>

<!-- blurred bookmarks -->
<i style="left:17px;top:77px;width:7px;height:15px;color:#e8c8a0"></i><i style="left:38px;top:80px;width:37px;height:9px;color:#c8c8c8"></i>
<i style="left:93px;top:76px;width:14px;height:18px;color:#3a90f4"></i><i style="left:120px;top:80px;width:9px;height:9px;color:#d8d8d8"></i>
<i style="left:149px;top:78px;width:7px;height:14px;color:#c0c0c0"></i><i style="left:175px;top:80px;width:76px;height:9px;color:#ccd2d8"></i>
<i style="left:272px;top:76px;width:14px;height:18px;color:#7a8a98"></i><i style="left:294px;top:80px;width:104px;height:9px;color:#d0d4d8"></i>
<i style="left:422px;top:76px;width:15px;height:18px;color:#f05a60"></i><i style="left:447px;top:80px;width:98px;height:9px;color:#d4d4d7"></i>
<i style="left:570px;top:76px;width:12px;height:18px;color:#e07a20"></i><i style="left:600px;top:80px;width:95px;height:9px;color:#d4d4d7"></i>
<i style="left:717px;top:76px;width:15px;height:18px;color:#3a90f4"></i><i style="left:747px;top:80px;width:104px;height:9px;color:#d0d4d8"></i>
<i style="left:871px;top:76px;width:13px;height:18px;color:#78c890"></i><i style="left:897px;top:80px;width:100px;height:9px;color:#d0d4d8"></i>
<i style="left:1021px;top:75px;width:13px;height:12px;color:#504a8a"></i><i style="left:1021px;top:87px;width:13px;height:8px;color:#807830"></i><i style="left:1046px;top:80px;width:104px;height:9px;color:#d0d4d8"></i>
<i style="left:1174px;top:76px;width:13px;height:18px;color:#6a8ccc"></i><i style="left:1199px;top:80px;width:98px;height:9px;color:#d0d4d8"></i>
<i style="left:1321px;top:78px;width:12px;height:14px;color:#f4b8b8"></i><i style="left:1340px;top:80px;width:30px;height:9px;color:#d8d8d8"></i>
<i style="left:1393px;top:76px;width:10px;height:18px;color:#f08088"></i><i style="left:1416px;top:80px;width:104px;height:9px;color:#d4d4d7"></i>
<i style="left:1540px;top:76px;width:11px;height:18px;color:#f8d050"></i><i style="left:1563px;top:80px;width:34px;height:9px;color:#d8d8d8"></i>
<i style="left:1766px;top:78px;width:3px;height:14px;color:#c4c4c4"></i><i style="left:1800px;top:76px;width:11px;height:18px;color:#f8d050"></i><i style="left:1820px;top:80px;width:89px;height:10px;color:#c8cacc"></i>

<!-- blurred redacted profile text -->
<i class="t" style="left:492px;top:205px;width:88px;height:12px;color:#3e3e3e"></i>
<i style="left:505px;top:226px;width:14px;height:5px;color:#444"></i><i style="left:608px;top:226px;width:40px;height:5px;color:#444"></i>
<i style="left:678px;top:271px;width:6px;height:7px;color:#888"></i>
<i style="left:455px;top:247px;width:8px;height:44px;color:#777"></i>

<!-- blurred taskbar -->
<i class="t" style="left:62px;top:1050px;width:13px;height:20px;color:#c4c4c4"></i><i class="t" style="left:88px;top:1054px;width:220px;height:13px;color:#c4c4c4"></i>
<i class="t" style="left:326px;top:1050px;width:60px;height:26px;color:#c4b880"></i><i class="t" style="left:350px;top:1044px;width:8px;height:6px;color:#e4b0e0"></i><i class="t" style="left:322px;top:1072px;width:8px;height:7px;color:#a4d860"></i><i class="t" style="left:380px;top:1072px;width:6px;height:7px;color:#a4d860"></i>
<i class="t" style="left:15px;top:1052px;width:16px;height:16px;color:#c8c8c8"></i>
<i class="t" style="left:405px;top:1052px;width:18px;height:16px;color:#5a5a5a"></i>
<i class="t" style="left:456px;top:1050px;width:18px;height:12px;color:#e0c050"></i><i class="t" style="left:458px;top:1062px;width:14px;height:8px;color:#4a88b8"></i>
<i class="t" style="left:508px;top:1046px;width:16px;height:28px;color:#8a1820"></i>
<i class="t" style="left:556px;top:1050px;width:18px;height:22px;color:#d0d4d8"></i>
<i class="t" style="left:605px;top:1052px;width:16px;height:18px;color:#929292"></i>
<i class="t" style="left:655px;top:1046px;width:16px;height:26px;color:#7aa4b4"></i>
<i class="t" style="left:704px;top:1046px;width:8px;height:26px;color:#d05848"></i><i class="t" style="left:712px;top:1046px;width:8px;height:26px;color:#4088c8"></i>
<i class="t" style="left:752px;top:1050px;width:16px;height:12px;color:#d8a8a8"></i><i class="t" style="left:752px;top:1062px;width:16px;height:10px;color:#1a7088"></i>
<i class="t" style="left:802px;top:1048px;width:17px;height:24px;color:#9a9a9a"></i>
<i class="t" style="left:852px;top:1052px;width:16px;height:20px;color:#406888"></i>
<i class="t" style="left:900px;top:1048px;width:18px;height:22px;color:#9092f8"></i>
<i class="t" style="left:949px;top:1050px;width:18px;height:22px;color:#e8aeae"></i>
<i class="t" style="left:998px;top:1047px;width:16px;height:26px;color:#b84c50"></i>
<i class="t" style="left:1047px;top:1050px;width:17px;height:22px;color:#98d070"></i>
<i class="t" style="left:1677px;top:1054px;width:6px;height:10px;color:#666"></i>
<i class="t" style="left:1699px;top:1050px;width:9px;height:20px;color:#f0f0f0"></i>
<i class="t" style="left:1718px;top:1054px;width:18px;height:12px;color:#666"></i><i class="t" style="left:1746px;top:1054px;width:14px;height:12px;color:#666"></i><i class="t" style="left:1773px;top:1054px;width:18px;height:10px;color:#5a5a5a"></i>
<i class="t" style="left:1822px;top:1044px;width:26px;height:7px;color:#666"></i><i class="t" style="left:1808px;top:1066px;width:54px;height:9px;color:#5e5e5e"></i>
<i class="t" style="left:1878px;top:1052px;width:22px;height:18px;color:#d0d0d0"></i>
</body></html>
